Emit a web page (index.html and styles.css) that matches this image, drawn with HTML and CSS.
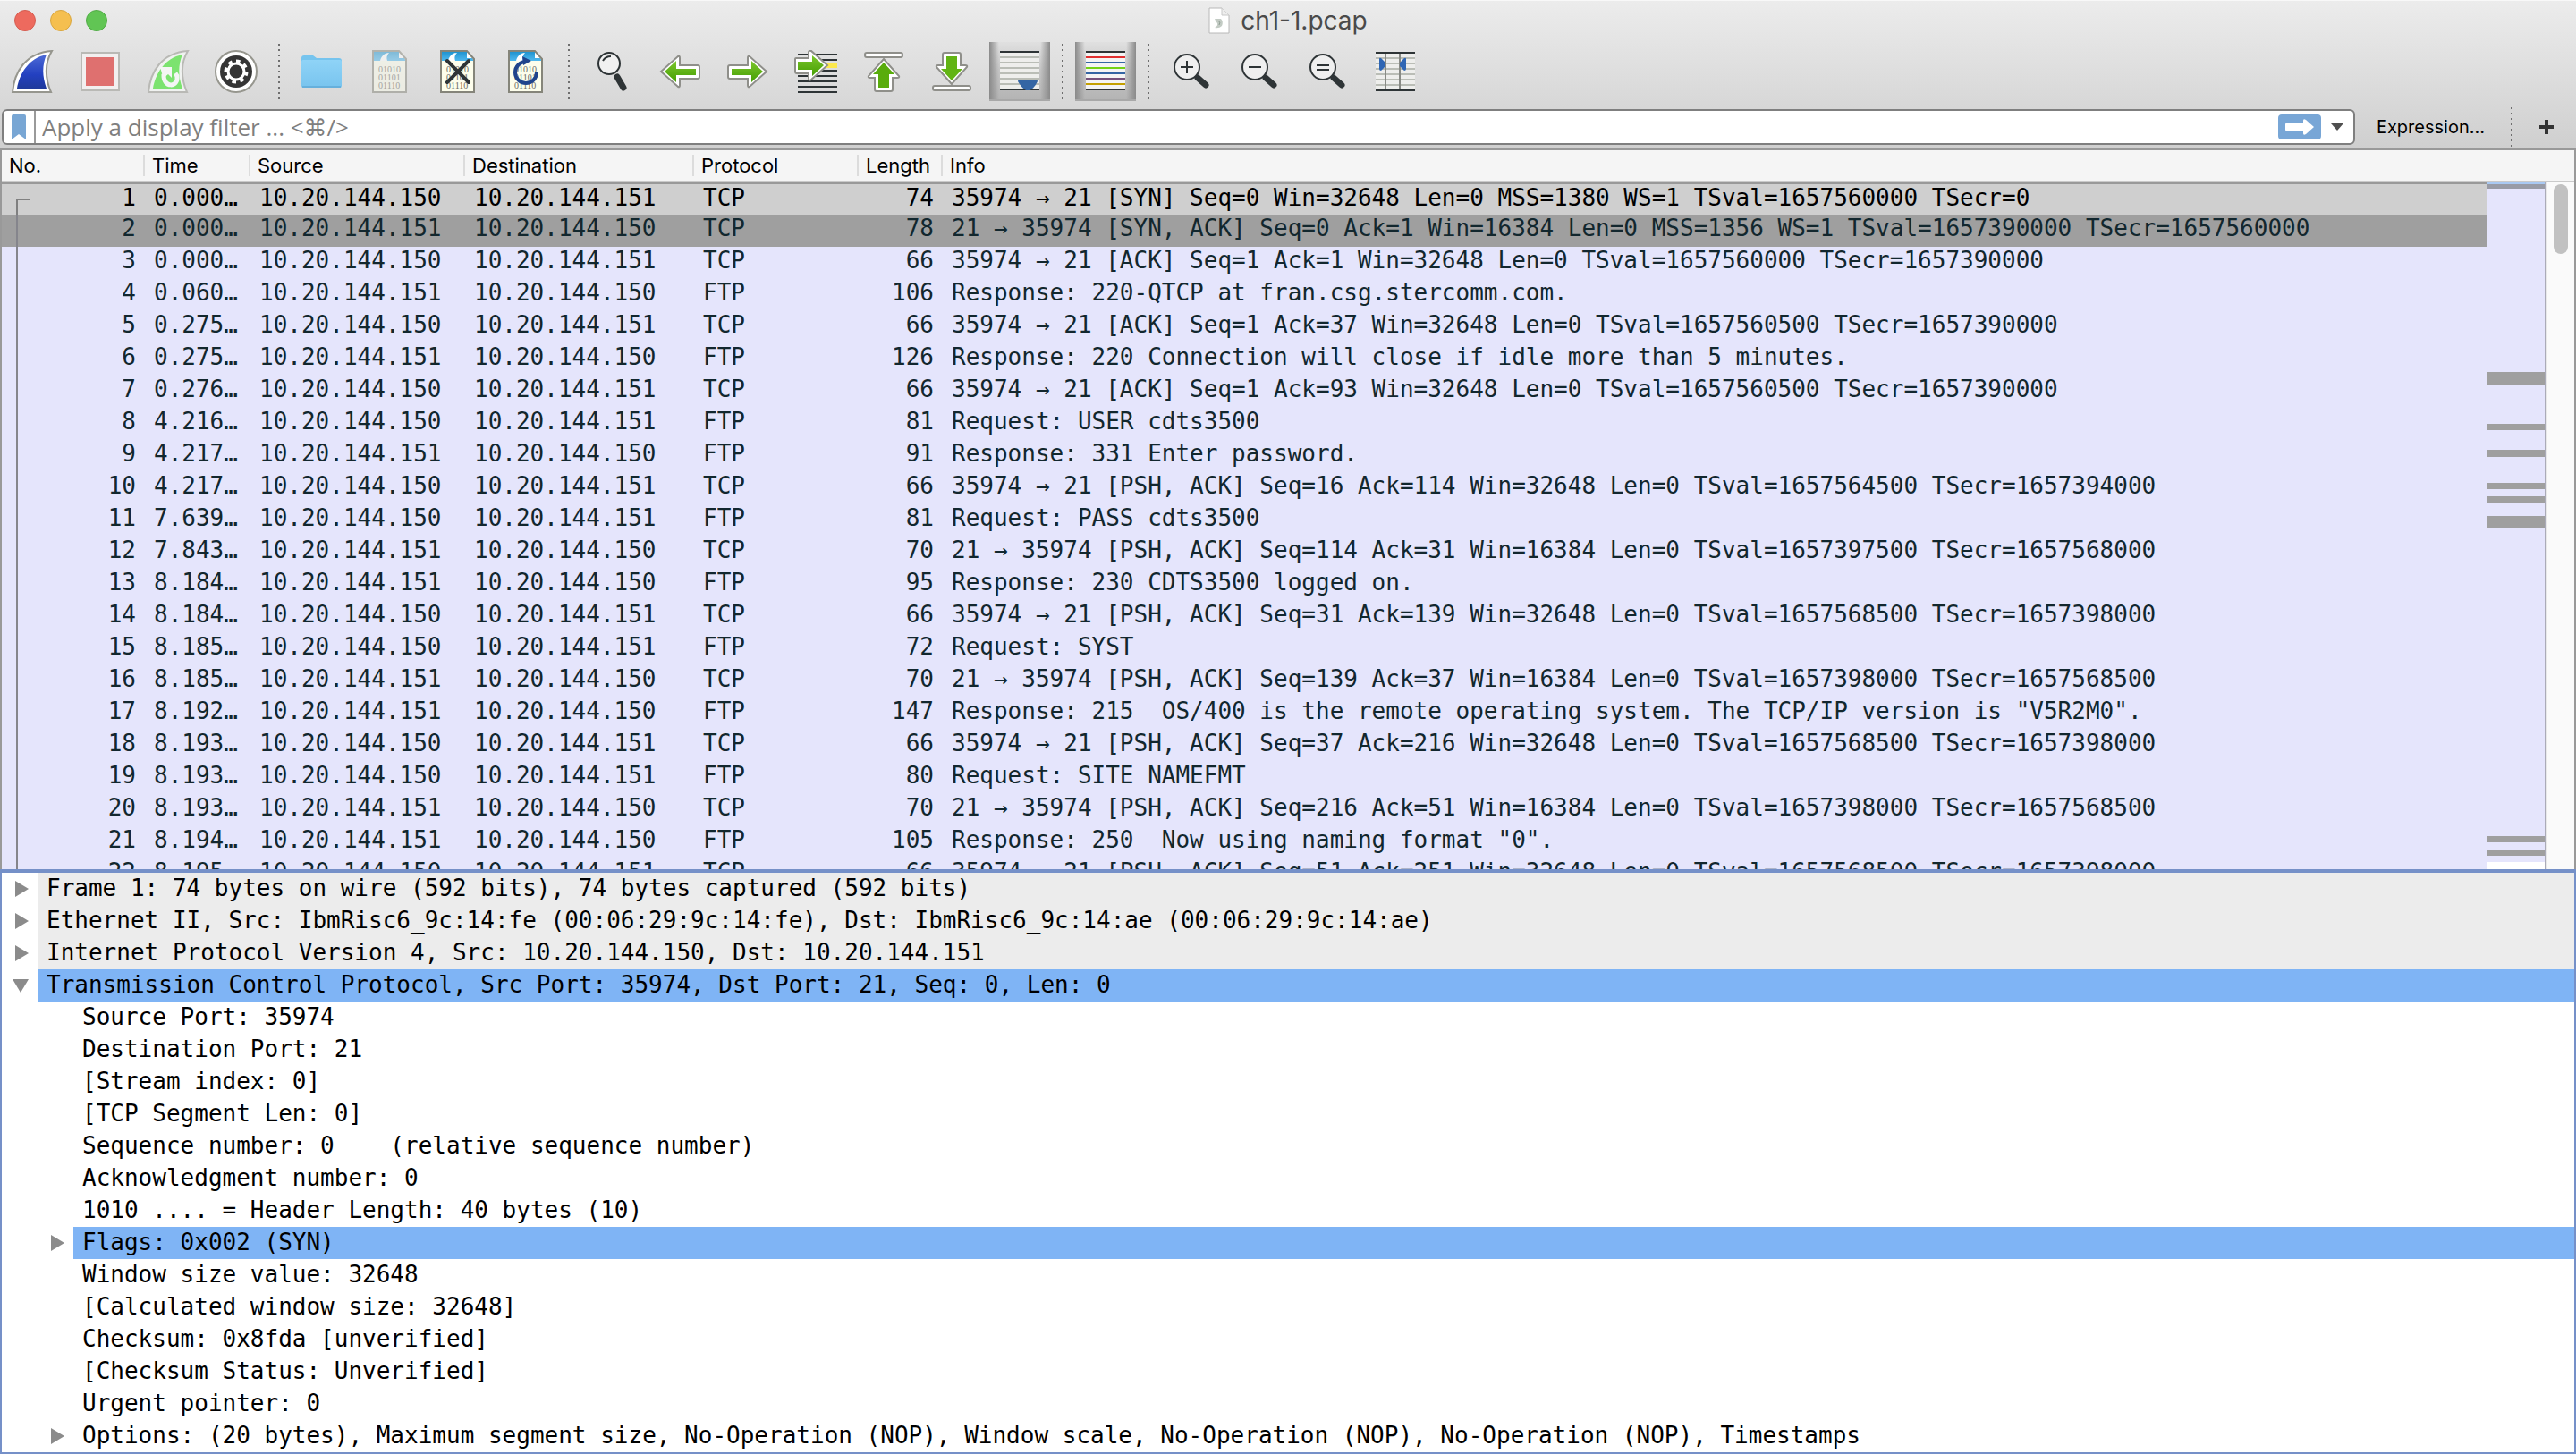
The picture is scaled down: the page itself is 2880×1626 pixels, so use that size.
FILE: index.html
```html
<!DOCTYPE html>
<html lang="en">
<head>
    <meta charset="UTF-8">
    <meta name="viewport" content="width=device-width, initial-scale=1.0">
    <title>ch1-1.pcap</title>
    <link rel="stylesheet" href="styles.css">
</head>
<body>
    <!-- Shared icon parts -->
    <svg class="defs" width="0" height="0" aria-hidden="true">
        <defs>
            <linearGradient id="blueFin" x1="0" y1="0" x2="0" y2="1">
                <stop offset="0" stop-color="#4d6bd6"/>
                <stop offset="0.6" stop-color="#2340c0"/>
                <stop offset="1" stop-color="#1f3a9a"/>
            </linearGradient>
            <linearGradient id="green" x1="0" y1="0" x2="0" y2="1">
                <stop offset="0" stop-color="#7cc62c"/>
                <stop offset="1" stop-color="#459e02"/>
            </linearGradient>
            <linearGradient id="docHead" x1="0" y1="0" x2="0" y2="1">
                <stop offset="0" stop-color="#1c90cc"/>
                <stop offset="1" stop-color="#4fb8ee"/>
            </linearGradient>
            <linearGradient id="folder" x1="0" y1="0" x2="0" y2="1">
                <stop offset="0" stop-color="#8fd3f7"/>
                <stop offset="1" stop-color="#78c4ee"/>
            </linearGradient>
            <g id="document">
                <path d="M5 1H34L42 10V47H5Z" fill="#fdfeec"/>
                <path d="M5 1H34L42 12H5Z" fill="url(#docHead)"/>
                <path d="M13 12C14 7 18 3 23 3C20 6 20 9 21 12Z" fill="#fff"/>
                <path d="M34 1V9H42Z" fill="#fff"/>
                <path d="M5 1H34L42 10V47H5Z" fill="none" stroke="#85857a" stroke-width="2"/>
                <g class="bits">
                    <text x="11" y="25">01010</text>
                    <text x="11" y="34">01101</text>
                    <text x="11" y="43">01110</text>
                </g>
            </g>
            <path id="arrow" d="M3 24L22 7Q24 6 24 9V17H44Q46 17 46 19V30Q46 32 44 32H24V39Q24 42 22 41Z"/>
            <path id="arrowFill" d="M7 24L20 12V21H42V28H20V36Z"/>
            <g id="lens">
                <path d="M31 31L40 39" stroke="#2e3436" stroke-width="7" stroke-linecap="round"/>
                <circle cx="19" cy="19" r="14" fill="#efefef" stroke="#2e3436" stroke-width="2"/>
            </g>
        </defs>
    </svg>

    <header class="title-bar">
        <div class="lights">
            <button type="button" class="light red" aria-label="Close"></button>
            <button type="button" class="light yellow" aria-label="Minimize"></button>
            <button type="button" class="light green" aria-label="Zoom"></button>
        </div>
        <svg class="title-icon" viewBox="0 0 24 30" aria-hidden="true">
            <path d="M1 1H15L23 9V29H1Z" fill="#fff" stroke="#b8b8b8"/>
            <path d="M15 1V9H23" fill="#eee" stroke="#c8c8c8"/>
            <path d="M7 13H14Q17 16 15 21Q12 24 7 23Q11 21 10 18Q8 16 7 13Z" fill="#c3cbc4"/>
            <path d="M11 15Q14 17 12 20" fill="none" stroke="#8b9a90"/>
        </svg>
        <h1>ch1-1.pcap</h1>
    </header>

    <nav class="toolbar" aria-label="Main toolbar">
        <button type="button" aria-label="Start capture">
            <svg viewBox="0 0 48 48">
                <path d="M2 47C4 25 16 3 46 1C38 14 38 31 45 47Z" fill="#fff" stroke="#96968e" stroke-width="2"/>
                <path d="M7 43C10 26 20 9 40 5C35 17 35 29 40 43Z" fill="url(#blueFin)"/>
            </svg>
        </button>
        <button type="button" aria-label="Stop capture">
            <svg viewBox="0 0 48 48">
                <rect x="3" y="3" width="42" height="42" fill="#f2efef" stroke="#b9b9b5" stroke-width="2"/>
                <rect x="8" y="8" width="32" height="32" fill="#df706f"/>
            </svg>
        </button>
        <button type="button" aria-label="Restart capture">
            <svg viewBox="0 0 48 48">
                <path d="M2 47C4 25 16 3 46 1C38 14 38 31 45 47Z" fill="#f0f2f0" stroke="#b9b9b5" stroke-width="2"/>
                <path d="M7 43C10 26 20 9 40 5C35 17 35 29 40 43Z" fill="#7ce36f"/>
                <path d="M19 27C18 43 36 42 34 29L32 26" fill="none" stroke="#f4f6f4" stroke-width="5"/>
                <path d="M15 19L28 19V31L24 27L18 32L17 26Z" fill="#f4f6f4"/>
            </svg>
        </button>
        <button type="button" aria-label="Capture options">
            <svg viewBox="0 0 48 48">
                <circle cx="24" cy="24" r="23" fill="#fff" stroke="#96968e" stroke-width="2"/>
                <circle cx="24" cy="24" r="18" fill="#353535"/>
                <circle cx="24" cy="24" r="9" fill="none" stroke="#fff" stroke-width="3"/>
                <circle cx="24" cy="24" r="11" fill="none" stroke="#fff" stroke-width="5" pathLength="80" stroke-dasharray="5 5"/>
            </svg>
        </button>
        <span class="separator"></span>
        <button type="button" aria-label="Open file">
            <svg viewBox="0 0 48 48">
                <path d="M1 9Q1 6 4 6H14L18 9H43Q46 9 46 12V20H1Z" fill="#76c4ee"/>
                <rect x="1" y="11" width="45" height="31" rx="2" fill="url(#folder)"/>
                <path d="M2 41H45" stroke="#66b0dc" stroke-width="2"/>
            </svg>
        </button>
        <button type="button" aria-label="Save file">
            <svg class="dimmed" viewBox="0 0 48 48"><use href="#document"/></svg>
        </button>
        <button type="button" aria-label="Close file">
            <svg viewBox="0 0 48 48">
                <use href="#document"/>
                <path d="M12 12L36 36M36 12L12 36" stroke="#2e3436" stroke-width="4" stroke-linecap="round"/>
            </svg>
        </button>
        <button type="button" aria-label="Reload file">
            <svg viewBox="0 0 48 48">
                <use href="#document"/>
                <path d="M36 25A12 12 0 1 1 24 13" fill="none" stroke="#20448c" stroke-width="4"/>
                <path d="M20 7L30 12L21 17Z" fill="#20448c"/>
            </svg>
        </button>
        <span class="separator"></span>
        <button type="button" aria-label="Find packet">
            <svg viewBox="0 0 48 48">
                <path d="M30 30L37 42" stroke="#2e3436" stroke-width="7" stroke-linecap="round"/>
                <circle cx="21" cy="15" r="12" fill="#f1f1f1" stroke="#2e3436" stroke-width="2"/>
                <path d="M14 12Q17 7 23 7" fill="none" stroke="#2e3436" stroke-width="2"/>
            </svg>
        </button>
        <button type="button" aria-label="Previous packet">
            <svg viewBox="0 0 48 48">
                <use href="#arrow" class="arrow-edge"/>
                <use href="#arrowFill" fill="url(#green)"/>
            </svg>
        </button>
        <button type="button" aria-label="Next packet">
            <svg viewBox="0 0 48 48">
                <g transform="matrix(-1 0 0 1 48 0)">
                    <use href="#arrow" class="arrow-edge"/>
                    <use href="#arrowFill" fill="url(#green)"/>
                </g>
            </svg>
        </button>
        <button type="button" aria-label="Go to packet">
            <svg viewBox="0 0 48 48">
                <path d="M30 17H48" stroke="#fce94f" stroke-width="6"/>
                <path d="M4 5H48M4 11H48M4 23H48M4 29H48M4 35H48M4 41H48M4 47H48" stroke="#2e3436" stroke-width="2"/>
                <path d="M37 17L19 1Q16 0 16 3V9H2Q1 9 1 10V24Q1 26 3 26H16V32Q16 35 19 33Z" class="arrow-edge"/>
                <path d="M33 17L20 6V13H4V22H20V29Z" fill="url(#green)"/>
            </svg>
        </button>
        <button type="button" aria-label="First packet">
            <svg viewBox="0 0 48 48">
                <rect x="3" y="3" width="42" height="5" rx="2" class="arrow-edge"/>
                <g transform="matrix(0 1 -1 0 48 7)">
                    <path d="M3 24L22 7Q24 6 24 9V14H37Q39 14 39 16V32Q39 34 37 34H24V39Q24 42 22 41Z" class="arrow-edge"/>
                    <path d="M7 24L20 12V18H35V30H20V36Z" fill="#59ac0c"/>
                </g>
            </svg>
        </button>
        <button type="button" aria-label="Last packet">
            <svg viewBox="0 0 48 48">
                <rect x="3" y="40" width="42" height="5" rx="2" class="arrow-edge"/>
                <g transform="matrix(0 -1 1 0 0 41)">
                    <path d="M3 24L22 7Q24 6 24 9V14H36Q38 14 38 16V32Q38 34 36 34H24V39Q24 42 22 41Z" class="arrow-edge"/>
                    <path d="M7 24L20 12V18H34V30H20V36Z" fill="#62b414"/>
                </g>
            </svg>
        </button>
        <button type="button" class="pressed" aria-label="Auto scroll" aria-pressed="true">
            <svg viewBox="0 0 48 48">
                <rect x="2" y="2" width="44" height="44" fill="#eeeeec"/>
                <path d="M2 9H46M2 15H46M2 21H46M2 27H46M2 33H46M2 39H46" stroke="#babdb6" stroke-width="2"/>
                <path d="M2 3H46M2 45H46" stroke="#2e3436" stroke-width="2"/>
                <path d="M22 36Q22 34 25 34H41Q44 34 44 36Q40 44 35 46H31Q26 43 22 36Z" fill="#3465a4"/>
            </svg>
        </button>
        <span class="separator"></span>
        <button type="button" class="pressed" aria-label="Colorize" aria-pressed="true">
            <svg viewBox="0 0 48 48">
                <rect x="2" y="2" width="44" height="44" fill="#f4f4f4"/>
                <path d="M2 3H46M2 45H46" stroke="#2e3436" stroke-width="2"/>
                <path d="M2 9H46" stroke="#e03030" stroke-width="2"/>
                <path d="M2 15H46M2 27H46" stroke="#3465a4" stroke-width="2"/>
                <path d="M2 21H46" stroke="#73d216" stroke-width="2"/>
                <path d="M2 33H46" stroke="#75507b" stroke-width="2"/>
                <path d="M2 39H46" stroke="#c4a000" stroke-width="2"/>
            </svg>
        </button>
        <span class="separator"></span>
        <button type="button" aria-label="Zoom in">
            <svg viewBox="0 0 48 48">
                <use href="#lens"/>
                <path d="M12 19H26M19 12V26" stroke="#2e3436" stroke-width="2"/>
            </svg>
        </button>
        <button type="button" aria-label="Zoom out">
            <svg viewBox="0 0 48 48">
                <use href="#lens"/>
                <path d="M12 19H26" stroke="#2e3436" stroke-width="2"/>
            </svg>
        </button>
        <button type="button" aria-label="Normal size">
            <svg viewBox="0 0 48 48">
                <use href="#lens"/>
                <path d="M12 17H26M12 22H26" stroke="#2e3436" stroke-width="2"/>
            </svg>
        </button>
        <button type="button" aria-label="Resize columns">
            <svg viewBox="0 0 48 48">
                <rect x="2" y="2" width="44" height="44" fill="#eeeeec"/>
                <path d="M2 9H46M2 15H46M2 21H46M2 27H46M2 33H46M2 39H46" stroke="#babdb6" stroke-width="2"/>
                <path d="M13 3V45M29 3V45" stroke="#888a85" stroke-width="2"/>
                <path d="M2 3H46M2 45H46" stroke="#2e3436" stroke-width="2"/>
                <path d="M6 10Q6 8 8 9L13 14V18L8 23Q6 23 6 21ZM36 10Q36 8 34 9L29 14V18L34 23Q36 23 36 21Z" fill="#2f66b4"/>
            </svg>
        </button>
    </nav>

    <form class="filter-bar">
        <div class="filter-field">
            <button type="button" class="bookmark" aria-label="Filter bookmarks">
                <svg viewBox="0 0 16 28"><path d="M0 2Q0 0 2 0H14Q16 0 16 2V28L8 22L0 28Z" fill="#78a6d4"/></svg>
            </button>
            <input type="text" aria-label="Display filter" placeholder="Apply a display filter ... &lt;⌘/&gt;">
            <button type="button" class="apply" aria-label="Apply filter">
                <svg viewBox="0 0 48 28">
                    <rect width="48" height="28" rx="4" fill="#78a6d6"/>
                    <path d="M8 11Q8 9 10 9H28V7Q28 4 31 6L40 14L31 22Q28 24 28 21V19H10Q8 19 8 17Z" fill="#fff"/>
                </svg>
            </button>
            <button type="button" class="history" aria-label="Recent filters">
                <svg viewBox="0 0 14 8"><path d="M0 0H14L7 8Z" fill="#4f4f4f"/></svg>
            </button>
        </div>
        <button type="button" class="expression">Expression...</button>
        <span class="separator"></span>
        <button type="button" class="add" aria-label="Add filter button">
            <svg viewBox="0 0 16 16"><path d="M8 0V16M0 8H16" stroke="#333" stroke-width="4"/></svg>
        </button>
    </form>

    <main class="panes">
        <section class="packet-pane" aria-label="Packet list">
            <div class="packet-scroll">
                <table class="packets">
                    <colgroup>
                        <col class="col-no">
                        <col class="col-time">
                        <col class="col-source">
                        <col class="col-destination">
                        <col class="col-protocol">
                        <col class="col-length">
                        <col>
                    </colgroup>
                    <thead>
                        <tr><th>No.</th><th>Time</th><th>Source</th><th>Destination</th><th>Protocol</th><th>Length</th><th>Info</th></tr>
                    </thead>
                    <tbody>
                        <tr class="selected"><td>1</td><td>0.000…</td><td>10.20.144.150</td><td>10.20.144.151</td><td>TCP</td><td>74</td><td>35974 → 21 [SYN] Seq=0 Win=32648 Len=0 MSS=1380 WS=1 TSval=1657560000 TSecr=0</td></tr>
                        <tr class="syn"><td>2</td><td>0.000…</td><td>10.20.144.151</td><td>10.20.144.150</td><td>TCP</td><td>78</td><td>21 → 35974 [SYN, ACK] Seq=0 Ack=1 Win=16384 Len=0 MSS=1356 WS=1 TSval=1657390000 TSecr=1657560000</td></tr>
                        <tr><td>3</td><td>0.000…</td><td>10.20.144.150</td><td>10.20.144.151</td><td>TCP</td><td>66</td><td>35974 → 21 [ACK] Seq=1 Ack=1 Win=32648 Len=0 TSval=1657560000 TSecr=1657390000</td></tr>
                        <tr><td>4</td><td>0.060…</td><td>10.20.144.151</td><td>10.20.144.150</td><td>FTP</td><td>106</td><td>Response: 220-QTCP at fran.csg.stercomm.com.</td></tr>
                        <tr><td>5</td><td>0.275…</td><td>10.20.144.150</td><td>10.20.144.151</td><td>TCP</td><td>66</td><td>35974 → 21 [ACK] Seq=1 Ack=37 Win=32648 Len=0 TSval=1657560500 TSecr=1657390000</td></tr>
                        <tr><td>6</td><td>0.275…</td><td>10.20.144.151</td><td>10.20.144.150</td><td>FTP</td><td>126</td><td>Response: 220 Connection will close if idle more than 5 minutes.</td></tr>
                        <tr><td>7</td><td>0.276…</td><td>10.20.144.150</td><td>10.20.144.151</td><td>TCP</td><td>66</td><td>35974 → 21 [ACK] Seq=1 Ack=93 Win=32648 Len=0 TSval=1657560500 TSecr=1657390000</td></tr>
                        <tr><td>8</td><td>4.216…</td><td>10.20.144.150</td><td>10.20.144.151</td><td>FTP</td><td>81</td><td>Request: USER cdts3500</td></tr>
                        <tr><td>9</td><td>4.217…</td><td>10.20.144.151</td><td>10.20.144.150</td><td>FTP</td><td>91</td><td>Response: 331 Enter password.</td></tr>
                        <tr><td>10</td><td>4.217…</td><td>10.20.144.150</td><td>10.20.144.151</td><td>TCP</td><td>66</td><td>35974 → 21 [PSH, ACK] Seq=16 Ack=114 Win=32648 Len=0 TSval=1657564500 TSecr=1657394000</td></tr>
                        <tr><td>11</td><td>7.639…</td><td>10.20.144.150</td><td>10.20.144.151</td><td>FTP</td><td>81</td><td>Request: PASS cdts3500</td></tr>
                        <tr><td>12</td><td>7.843…</td><td>10.20.144.151</td><td>10.20.144.150</td><td>TCP</td><td>70</td><td>21 → 35974 [PSH, ACK] Seq=114 Ack=31 Win=16384 Len=0 TSval=1657397500 TSecr=1657568000</td></tr>
                        <tr><td>13</td><td>8.184…</td><td>10.20.144.151</td><td>10.20.144.150</td><td>FTP</td><td>95</td><td>Response: 230 CDTS3500 logged on.</td></tr>
                        <tr><td>14</td><td>8.184…</td><td>10.20.144.150</td><td>10.20.144.151</td><td>TCP</td><td>66</td><td>35974 → 21 [PSH, ACK] Seq=31 Ack=139 Win=32648 Len=0 TSval=1657568500 TSecr=1657398000</td></tr>
                        <tr><td>15</td><td>8.185…</td><td>10.20.144.150</td><td>10.20.144.151</td><td>FTP</td><td>72</td><td>Request: SYST</td></tr>
                        <tr><td>16</td><td>8.185…</td><td>10.20.144.151</td><td>10.20.144.150</td><td>TCP</td><td>70</td><td>21 → 35974 [PSH, ACK] Seq=139 Ack=37 Win=16384 Len=0 TSval=1657398000 TSecr=1657568500</td></tr>
                        <tr><td>17</td><td>8.192…</td><td>10.20.144.151</td><td>10.20.144.150</td><td>FTP</td><td>147</td><td>Response: 215  OS/400 is the remote operating system. The TCP/IP version is "V5R2M0".</td></tr>
                        <tr><td>18</td><td>8.193…</td><td>10.20.144.150</td><td>10.20.144.151</td><td>TCP</td><td>66</td><td>35974 → 21 [PSH, ACK] Seq=37 Ack=216 Win=32648 Len=0 TSval=1657568500 TSecr=1657398000</td></tr>
                        <tr><td>19</td><td>8.193…</td><td>10.20.144.150</td><td>10.20.144.151</td><td>FTP</td><td>80</td><td>Request: SITE NAMEFMT</td></tr>
                        <tr><td>20</td><td>8.193…</td><td>10.20.144.151</td><td>10.20.144.150</td><td>TCP</td><td>70</td><td>21 → 35974 [PSH, ACK] Seq=216 Ack=51 Win=16384 Len=0 TSval=1657398000 TSecr=1657568500</td></tr>
                        <tr><td>21</td><td>8.194…</td><td>10.20.144.151</td><td>10.20.144.150</td><td>FTP</td><td>105</td><td>Response: 250  Now using naming format "0".</td></tr>
                        <tr><td>22</td><td>8.195…</td><td>10.20.144.150</td><td>10.20.144.151</td><td>TCP</td><td>66</td><td>35974 → 21 [PSH, ACK] Seq=51 Ack=251 Win=32648 Len=0 TSval=1657568500 TSecr=1657398000</td></tr>
                    </tbody>
                </table>
            </div>
            <aside class="side">
                <div class="side-head"></div>
                <div class="side-body">
                    <svg class="minimap" viewBox="0 0 64 768" preserveAspectRatio="none" aria-hidden="true">
                        <rect width="64" height="760" fill="#e5e5fc"/>
                        <rect y="760" width="64" height="8" fill="#fff"/>
                        <rect width="64" height="2" fill="#a9c9f2"/>
                        <rect y="2" width="64" height="5" fill="#989ba6"/>
                        <path d="M0 212H64V226H0ZM0 270H64V277H0ZM0 299H64V307H0ZM0 336H64V343H0ZM0 351H64V358H0ZM0 373H64V387H0ZM0 731H64V738H0ZM0 746H64V753H0Z" fill="#9f9f9f"/>
                    </svg>
                    <div class="scrollbar"><div class="thumb"></div></div>
                </div>
            </aside>
        </section>

        <section class="detail-pane" aria-label="Packet details">
            <ul class="tree">
                <li class="layer"><button type="button" class="toggle" aria-label="Expand"></button><span>Frame 1: 74 bytes on wire (592 bits), 74 bytes captured (592 bits)</span></li>
                <li class="layer"><button type="button" class="toggle" aria-label="Expand"></button><span>Ethernet II, Src: IbmRisc6_9c:14:fe (00:06:29:9c:14:fe), Dst: IbmRisc6_9c:14:ae (00:06:29:9c:14:ae)</span></li>
                <li class="layer"><button type="button" class="toggle" aria-label="Expand"></button><span>Internet Protocol Version 4, Src: 10.20.144.150, Dst: 10.20.144.151</span></li>
                <li class="marked"><button type="button" class="toggle open" aria-label="Collapse"></button><span>Transmission Control Protocol, Src Port: 35974, Dst Port: 21, Seq: 0, Len: 0</span></li>
                <li class="field"><span>Source Port: 35974</span></li>
                <li class="field"><span>Destination Port: 21</span></li>
                <li class="field"><span>[Stream index: 0]</span></li>
                <li class="field"><span>[TCP Segment Len: 0]</span></li>
                <li class="field"><span>Sequence number: 0    (relative sequence number)</span></li>
                <li class="field"><span>Acknowledgment number: 0</span></li>
                <li class="field"><span>1010 .... = Header Length: 40 bytes (10)</span></li>
                <li class="nested marked"><button type="button" class="toggle" aria-label="Expand"></button><span>Flags: 0x002 (SYN)</span></li>
                <li class="field"><span>Window size value: 32648</span></li>
                <li class="field"><span>[Calculated window size: 32648]</span></li>
                <li class="field"><span>Checksum: 0x8fda [unverified]</span></li>
                <li class="field"><span>[Checksum Status: Unverified]</span></li>
                <li class="field"><span>Urgent pointer: 0</span></li>
                <li class="nested"><button type="button" class="toggle" aria-label="Expand"></button><span>Options: (20 bytes), Maximum segment size, No-Operation (NOP), Window scale, No-Operation (NOP), No-Operation (NOP), Timestamps</span></li>
            </ul>
        </section>
    </main>
</body>
</html>
```

FILE: styles.css
```css
:root {
    --row-color: #e5e5fc;
    --row-text: #12272e;
    --syn-color: #9f9f9f;
    --selected-color: #cfcfcf;
    --marked-color: #7fb4f5;
    --focus-color: #7590c8;
    --line-color: #7f7f7f;
    --ui-font: Inter, "Open Sans", sans-serif;
    --mono-font: "DejaVu Sans Mono", monospace;
}

* {
    box-sizing: border-box;
    margin: 0;
    padding: 0;
}

body {
    display: flex;
    flex-direction: column;
    height: 100vh;
    overflow: hidden;
    font-family: var(--ui-font);
    font-size: 22px;
    color: #000;
    background: linear-gradient(#ececec, #cfcfcf 166px);
}

button {
    display: flex;
    align-items: center;
    justify-content: center;
    border: none;
    background: none;
    font: inherit;
    color: inherit;
}

.defs {
    position: absolute;
}

/* Title bar */
.title-bar {
    display: flex;
    align-items: center;
    justify-content: center;
    gap: 12px;
    height: 46px;
    padding-bottom: 2px;
    border-top: 1px solid #f8f8f8;
}

.title-bar h1 {
    font-size: 28px;
    font-weight: 400;
    color: #4a4a4a;
}

.title-icon {
    width: 24px;
    height: 30px;
}

.lights {
    position: absolute;
    left: 16px;
    display: flex;
    gap: 16px;
}

.light {
    width: 24px;
    height: 24px;
    border-radius: 50%;
}

.light.red {
    background: #ed6a5e;
    border: 1px solid #d45c50;
}

.light.yellow {
    background: #f5bf4f;
    border: 1px solid #d9a63e;
}

.light.green {
    background: #61c554;
    border: 1px solid #50ab45;
}

/* Toolbar */
.toolbar {
    display: flex;
    align-items: center;
    gap: 8px;
    height: 76px;
    padding: 0 2px 8px;
}

.toolbar button {
    width: 68px;
    height: 66px;
}

.toolbar svg {
    width: 48px;
    height: 48px;
}

.toolbar .pressed {
    background: linear-gradient(90deg, #8a8a8a, #bcbcbc00 16%, #bcbcbc00 84%, #8a8a8a), linear-gradient(#e0e0e0, #c4c4c4 50%, #b4b4b4);
    border-bottom: 2px solid #a8a8a8;
}

.separator {
    align-self: center;
    width: 12px;
    height: 62px;
    background: repeating-linear-gradient(#6e6e6e 0 2px, transparent 2px 6px) center / 2px 100% no-repeat;
}

.dimmed {
    opacity: 0.5;
}

.bits {
    font-family: "Liberation Serif", serif;
    font-size: 10px;
    fill: #6b6b66;
}

.arrow-edge {
    fill: #fff;
    stroke: #8f8f8a;
    stroke-width: 2px;
}

/* Display filter */
.filter-bar {
    display: flex;
    align-items: center;
    height: 44px;
    padding: 0 0 4px 2px;
}

.filter-field {
    display: flex;
    flex: 1;
    align-items: center;
    height: 40px;
    border: 2px solid var(--line-color);
    border-radius: 6px;
    background: #fff;
}

.bookmark {
    width: 36px;
    height: 36px;
    border-right: 2px solid #9a9a9a;
}

.bookmark svg {
    width: 16px;
    height: 28px;
}

.filter-field input {
    flex: 1;
    padding: 0 7px;
    border: none;
    outline: none;
    background: none;
    font-family: "Open Sans", "DejaVu Sans", sans-serif;
    font-size: 26px;
    line-height: 36px;
}

.filter-field input::placeholder {
    color: #7f7f7f;
}

.apply svg {
    width: 48px;
    height: 28px;
}

.history {
    width: 36px;
    height: 36px;
}

.history svg {
    width: 14px;
    height: 8px;
}

.expression {
    padding: 0 24px;
    font-size: 20px;
}

.filter-bar .separator {
    height: 44px;
}

.add {
    width: 66px;
    height: 36px;
}

.add svg {
    width: 16px;
    height: 16px;
}

/* Packet list */
.panes {
    display: flex;
    flex: 1;
    flex-direction: column;
    min-height: 0;
}

.packet-pane {
    display: flex;
    flex: 1;
    min-height: 0;
    border: 2px solid #999;
    border-bottom: none;
    background: #fff;
}

.packet-scroll {
    flex: 1;
    min-width: 0;
    overflow: hidden;
    background: var(--row-color);
}

.packets {
    width: 100%;
    table-layout: fixed;
    border-collapse: separate;
    border-spacing: 0;
}

.col-no {
    width: 160px;
}

.col-time {
    width: 118px;
}

.col-source {
    width: 240px;
}

.col-destination {
    width: 256px;
}

.col-protocol {
    width: 184px;
}

.col-length {
    width: 94px;
}

.packets th {
    height: 36px;
    padding: 0 8px;
    border-bottom: 2px solid #cacaca;
    background: linear-gradient(#dcdcdc, #dcdcdc) right center / 2px 24px no-repeat #f5f5f5;
    font-weight: 400;
    line-height: 34px;
    text-align: left;
}

.packets th:last-child {
    background: #f5f5f5;
}

.packets td {
    height: 36px;
    padding: 0 10px 6px;
    background-color: var(--row-color);
    color: var(--row-text);
    font-family: var(--mono-font);
    font-size: 26px;
    line-height: 30px;
    white-space: pre;
    overflow: hidden;
}

.packets td:first-child,
.packets td:nth-child(6) {
    text-align: right;
}

/* Line that ties the packets of one conversation together */
.packets td:first-child {
    background-image: linear-gradient(#85858c, #85858c);
    background-position: 16px 0;
    background-size: 2px 100%;
    background-repeat: no-repeat;
}

.packets .selected td {
    padding-bottom: 4px;
    border-top: 2px solid #999;
    background-color: var(--selected-color);
    color: #000;
}

.packets .selected td:first-child {
    background-image: linear-gradient(#808080, #808080), linear-gradient(#808080, #808080);
    background-position: 16px 16px, 16px 16px;
    background-size: 2px 100%, 16px 2px;
}

.packets .syn td {
    background-color: var(--syn-color);
}

.side {
    display: flex;
    flex-direction: column;
    width: 98px;
}

.side-head {
    height: 36px;
    border-bottom: 2px solid #cacaca;
    background: #f5f5f5;
}

.side-body {
    display: flex;
    flex: 1;
    min-height: 0;
}

.minimap {
    width: 66px;
    height: 100%;
    border: solid #ababb8;
    border-width: 0 1px;
}

.scrollbar {
    flex: 1;
    padding: 2px 7px;
    border-left: 2px solid #e8e8e8;
    background: #fafafa;
}

.thumb {
    width: 16px;
    height: 78px;
    border-radius: 8px;
    background: #c1c1c1;
}

/* Packet details */
.detail-pane {
    border: 2px solid var(--focus-color);
    border-top-width: 4px;
    background: #fff;
}

.tree {
    list-style: none;
    font-family: var(--mono-font);
    font-size: 26px;
    line-height: 34px;
}

.tree li {
    display: flex;
    height: 36px;
}

.tree span {
    flex: 1;
    padding-left: 10px;
    white-space: pre;
    overflow: hidden;
}

.tree .layer span {
    background: #ececec;
}

.tree .marked span {
    background: var(--marked-color);
}

.tree .field {
    padding-left: 80px;
}

.tree .nested {
    padding-left: 40px;
}

.toggle {
    justify-content: flex-end;
    width: 40px;
    height: 36px;
    padding-right: 10px;
}

.toggle::before {
    content: "";
    border: solid transparent;
    border-width: 9px 0 9px 15px;
    border-left-color: #8b8b8b;
}

.toggle.open::before {
    border-width: 15px 9px 0;
    border-color: #8b8b8b transparent transparent;
}
```
